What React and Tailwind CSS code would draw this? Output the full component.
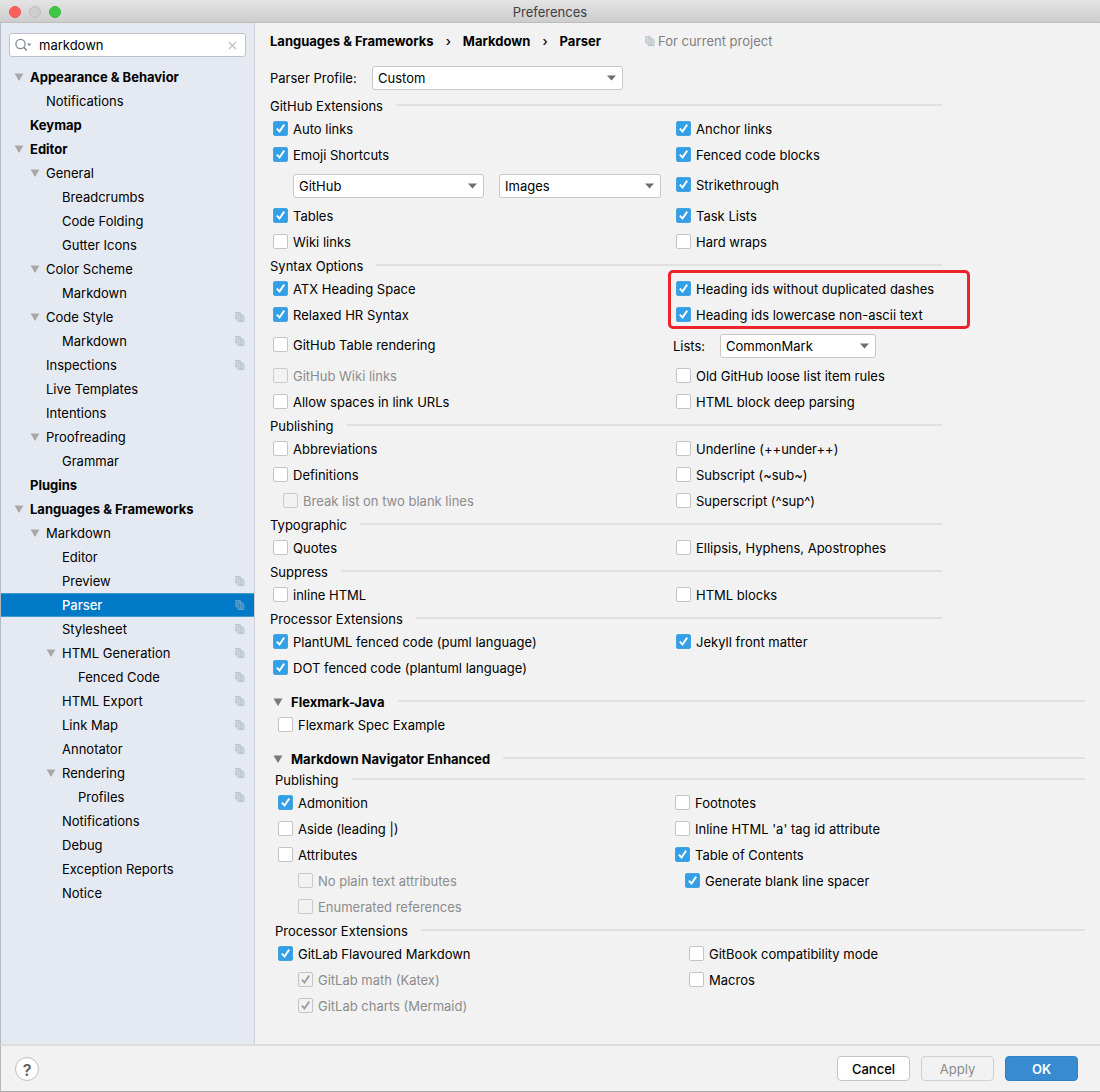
import React from "react";

const TREE = [
  { label: "Appearance & Behavior", depth: 0, open: true, bold: true },
  { label: "Notifications", depth: 1 },
  { label: "Keymap", depth: 0, bold: true },
  { label: "Editor", depth: 0, open: true, bold: true },
  { label: "General", depth: 1, open: true },
  { label: "Breadcrumbs", depth: 2 },
  { label: "Code Folding", depth: 2 },
  { label: "Gutter Icons", depth: 2 },
  { label: "Color Scheme", depth: 1, open: true },
  { label: "Markdown", depth: 2 },
  { label: "Code Style", depth: 1, open: true, project: true },
  { label: "Markdown", depth: 2, project: true },
  { label: "Inspections", depth: 1, project: true },
  { label: "Live Templates", depth: 1 },
  { label: "Intentions", depth: 1 },
  { label: "Proofreading", depth: 1, open: true },
  { label: "Grammar", depth: 2 },
  { label: "Plugins", depth: 0, bold: true },
  { label: "Languages & Frameworks", depth: 0, open: true, bold: true },
  { label: "Markdown", depth: 1, open: true },
  { label: "Editor", depth: 2 },
  { label: "Preview", depth: 2, project: true },
  { label: "Parser", depth: 2, project: true, selected: true },
  { label: "Stylesheet", depth: 2, project: true },
  { label: "HTML Generation", depth: 2, open: true, project: true },
  { label: "Fenced Code", depth: 3, project: true },
  { label: "HTML Export", depth: 2, project: true },
  { label: "Link Map", depth: 2, project: true },
  { label: "Annotator", depth: 2, project: true },
  { label: "Rendering", depth: 2, open: true, project: true },
  { label: "Profiles", depth: 3, project: true },
  { label: "Notifications", depth: 2 },
  { label: "Debug", depth: 2 },
  { label: "Exception Reports", depth: 2 },
  { label: "Notice", depth: 2 },
];

const INDENT = ["pl-3", "pl-7", "pl-11", "pl-15"];

function ProjectIcon({ className = "" }) {
  return (
    <svg viewBox="0 0 10 10" className={`size-[10px] shrink-0 ${className}`} fill="none" stroke="currentColor" aria-hidden="true">
      <path d="M2.5 7H0.8V0.5H5.5V1.5" strokeWidth="0.9" />
      <path d="M1 1h4.5v1H2.5v5H1z" fill="currentColor" fillOpacity="0.5" stroke="none" />
      <path d="M3 2.5h4l2 1.8v5.2H3z" strokeWidth="0.9" fill="currentColor" fillOpacity="0.35" />
      <path d="M5.4 3v6M7 3v6" strokeWidth="0.8" />
    </svg>
  );
}

function Triangle({ className = "" }) {
  return (
    <svg viewBox="0 0 10 8" className={`h-2 w-[10px] shrink-0 ${className}`} fill="currentColor" aria-hidden="true">
      <path d="M0.5 0.5h9L5 8z" />
    </svg>
  );
}

function TreeRow({ item }) {
  return (
    <li>
      <button
        type="button"
        aria-current={item.selected ? "page" : undefined}
        className={`flex h-6 w-full items-center gap-[5px] pr-[9px] text-left ${INDENT[item.depth]} ${
          item.selected ? "border-y border-[#3d9ad3] bg-[#0079c6] text-white" : ""
        } ${item.bold ? "font-bold" : item.selected ? "font-medium" : ""}`}
      >
        <span className="flex w-3 shrink-0 justify-center">
          {item.open && <Triangle className="text-[#a9a9a9]" />}
        </span>
        <span className="grow truncate">{item.label}</span>
        {item.project && <ProjectIcon className={item.selected ? "text-[#6aa5cc]" : "text-[#b3bfc6]"} />}
      </button>
    </li>
  );
}

function Check({ label, on = false, disabled = false, className = "" }) {
  return (
    <label className={`flex h-[26px] items-center gap-[5px] pb-[1px] pl-[3px] ${disabled ? "text-[#8c8c8c]" : ""} ${className}`}>
      <span className="grid size-[15px] shrink-0 place-items-center">
        <input
          type="checkbox"
          defaultChecked={on}
          disabled={disabled}
          className="peer col-start-1 row-start-1 size-[15px] appearance-none rounded-[2px] border border-[#c4c4c4] bg-white checked:border-[#45a3e2] checked:bg-[#339fe6] disabled:border-[#cacaca] disabled:bg-[#f2f2f2]"
        />
        <svg
          viewBox="0 0 15 15"
          className="pointer-events-none col-start-1 row-start-1 hidden size-[15px] text-white peer-checked:block peer-disabled:text-[#a0a0a0]"
          fill="none"
          stroke="currentColor"
          strokeWidth="1.9"
          aria-hidden="true"
        >
          <path d="M3.8 7.6l2.7 2.9L11.2 3.6" />
        </svg>
      </span>
      <span className="pt-[1px] whitespace-nowrap">{label}</span>
    </label>
  );
}

function Combo({ label, value, options, className = "" }) {
  return (
    <span className={`grid h-6 items-center ${className}`}>
      <select
        aria-label={label}
        defaultValue={value}
        className="col-start-1 row-start-1 h-6 w-full appearance-none rounded-[3px] border border-[#c8c8c8] bg-white pr-6 pl-[5px]"
      >
        {options.map((o) => (
          <option key={o}>{o}</option>
        ))}
      </select>
      <svg
        viewBox="0 0 9 6"
        className="pointer-events-none col-start-1 row-start-1 mr-[7px] h-[6px] w-[9px] justify-self-end text-[#6e6e6e]"
        fill="currentColor"
        aria-hidden="true"
      >
        <path d="M0 0.5h9L4.5 5.5z" />
      </svg>
    </span>
  );
}

function Section({ title }) {
  return (
    <div className="flex h-[21px] items-center gap-[13px]">
      <h3 className="whitespace-nowrap">{title}</h3>
      <span className="mb-[2px] h-[2px] grow bg-[#e0e0e0]" />
    </div>
  );
}

function Fold({ title, className = "" }) {
  return (
    <button type="button" aria-expanded="true" className={`flex h-5 w-full items-center gap-2 pl-[3px] ${className}`}>
      <Triangle className="text-[#7a7a7a]" />
      <span className="pr-[5px] font-bold whitespace-nowrap">{title}</span>
      <span className="mb-[2px] h-[2px] grow bg-[#e0e0e0]" />
    </button>
  );
}

function Columns({ children }) {
  return <div className="grid grid-cols-[403px_1fr]">{children}</div>;
}

function Sidebar() {
  return (
    <aside className="w-[255px] shrink-0 border-r border-l border-r-[#d0d2d6] border-l-[#b5b8bd] bg-[#e5eaf2] pt-[10px]">
      <label className="mx-2 mb-2 flex h-6 items-center rounded-[3px] border border-[#bfc3c8] bg-white pr-2 pl-[5px]">
        <svg viewBox="0 0 18 14" className="h-[14px] w-[18px] shrink-0 text-[#7f8b91]" fill="none" stroke="currentColor" strokeWidth="1.3" aria-hidden="true">
          <circle cx="5.5" cy="6" r="4.6" />
          <path d="M8.8 9.3l3 3.2" strokeWidth="1.5" />
          <path d="M12 5.5h4.4L14.2 8.2z" fill="currentColor" stroke="none" />
        </svg>
        <input aria-label="Search" defaultValue="markdown" className="ml-[6px] w-0 grow bg-transparent outline-none" />
        <button type="button" aria-label="Clear search">
          <svg viewBox="0 0 9 9" className="size-[9px] text-[#b9bec2]" fill="none" stroke="currentColor" strokeWidth="1.2" aria-hidden="true">
            <path d="M1 1l7 7M8 1l-7 7" />
          </svg>
        </button>
      </label>
      <ul>
        {TREE.map((item, i) => (
          <TreeRow key={i} item={item} />
        ))}
      </ul>
    </aside>
  );
}

function Settings() {
  return (
    <main className="min-w-0 grow pt-[6px] pr-[15px] pl-[15px]">
      <div className="flex h-6 items-center whitespace-nowrap">
        <nav aria-label="Breadcrumb" className="flex gap-3 font-bold">
          <span>Languages &amp; Frameworks</span>
          <span className="font-medium">›</span>
          <span>Markdown</span>
          <span className="font-medium">›</span>
          <span>Parser</span>
        </nav>
        <ProjectIcon className="mr-[3px] ml-11 text-[#b3bfc6]" />
        <span className="text-[#808080]">For current project</span>
      </div>

      <div className="mt-[13px] mb-[5px] flex items-center">
        <span className="w-[102px]">Parser Profile:</span>
        <Combo label="Parser Profile" value="Custom" options={["Custom", "GitHub", "GitLab"]} className="w-[251px]" />
      </div>

      <div className="max-w-[672px]">
        <Section title="GitHub Extensions" />
        <Columns>
          <div>
            <Check label="Auto links" on />
            <Check label="Emoji Shortcuts" on />
            <div className="flex h-[35px] items-center gap-[15px] pl-[23px]">
              <Combo label="Emoji shortcut type" value="GitHub" options={["GitHub", "Emoji Cheat Sheet"]} className="w-[191px]" />
              <Combo label="Emoji image type" value="Images" options={["Images", "Unicode"]} className="w-[162px]" />
            </div>
            <Check label="Tables" on />
            <Check label="Wiki links" />
          </div>
          <div>
            <Check label="Anchor links" on />
            <Check label="Fenced code blocks" on />
            <div className="flex h-[35px] items-start pt-1">
              <Check label="Strikethrough" on />
            </div>
            <Check label="Task Lists" on />
            <Check label="Hard wraps" />
          </div>
        </Columns>

        <Section title="Syntax Options" />
        <Columns>
          <div>
            <Check label="ATX Heading Space" on />
            <Check label="Relaxed HR Syntax" on />
            <div className="flex h-[35px] items-start pt-1">
              <Check label="GitHub Table rendering" />
            </div>
            <Check label="GitHub Wiki links" disabled />
            <Check label="Allow spaces in link URLs" />
          </div>
          <div>
            <div className="relative">
              <Check label="Heading ids without duplicated dashes" on />
              <Check label="Heading ids lowercase non-ascii text" on />
              <span className="pointer-events-none absolute -top-[6px] -bottom-[1px] -left-[5px] w-[302px] rounded-[5px] border-3 border-[#ee2229]" />
            </div>
            <div className="flex h-[35px] items-center">
              <span className="w-[47px]">Lists:</span>
              <Combo label="Lists" value="CommonMark" options={["CommonMark", "Fixed", "GitHub"]} className="w-[156px]" />
            </div>
            <Check label="Old GitHub loose list item rules" />
            <Check label="HTML block deep parsing" />
          </div>
        </Columns>

        <Section title="Publishing" />
        <Columns>
          <div>
            <Check label="Abbreviations" />
            <Check label="Definitions" />
            <Check label="Break list on two blank lines" disabled className="ml-[10px]" />
          </div>
          <div>
            <Check label="Underline (++under++)" />
            <Check label="Subscript (~sub~)" />
            <Check label="Superscript (^sup^)" />
          </div>
        </Columns>

        <Section title="Typographic" />
        <Columns>
          <Check label="Quotes" />
          <Check label="Ellipsis, Hyphens, Apostrophes" />
        </Columns>

        <Section title="Suppress" />
        <Columns>
          <Check label="inline HTML" />
          <Check label="HTML blocks" />
        </Columns>

        <Section title="Processor Extensions" />
        <Columns>
          <div>
            <Check label="PlantUML fenced code (puml language)" on />
            <Check label="DOT fenced code (plantuml language)" on />
          </div>
          <Check label="Jekyll front matter" on />
        </Columns>
      </div>

      <Fold title="Flexmark-Java" className="mt-[11px]" />
      <div className="pl-[5px]">
        <Check label="Flexmark Spec Example" />
      </div>

      <Fold title="Markdown Navigator Enhanced" className="mt-[11px]" />
      <div className="pb-6 pl-[5px]">
        <Section title="Publishing" />
        <div className="grid grid-cols-[397px_1fr]">
          <div>
            <Check label="Admonition" on />
            <Check label="Aside (leading |)" />
            <Check label="Attributes" />
            <Check label="No plain text attributes" disabled className="ml-5" />
            <Check label="Enumerated references" disabled className="ml-5" />
          </div>
          <div>
            <Check label="Footnotes" />
            <Check label="Inline HTML 'a' tag id attribute" />
            <Check label="Table of Contents" on />
            <Check label="Generate blank line spacer" on className="ml-[10px]" />
          </div>
        </div>
        <Section title="Processor Extensions" />
        <div className="grid grid-cols-[411px_1fr]">
          <div>
            <Check label="GitLab Flavoured Markdown" on />
            <Check label="GitLab math (Katex)" on disabled className="ml-5 [&_input]:checked:border-[#c4c4c4] [&_input]:checked:bg-[#f2f2f2]" />
            <Check label="GitLab charts (Mermaid)" on disabled className="ml-5 [&_input]:checked:border-[#c4c4c4] [&_input]:checked:bg-[#f2f2f2]" />
          </div>
          <div>
            <Check label="GitBook compatibility mode" />
            <Check label="Macros" />
          </div>
        </div>
      </div>
    </main>
  );
}

export default function App() {
  return (
    <div className="flex min-h-screen flex-col border-b border-[#a8a8a8] bg-[#f2f2f2] font-['Inter',sans-serif] text-[13px] leading-4 text-black">
      <header className="grid h-[23px] shrink-0 grid-cols-[1fr_auto_1fr] items-center border-b border-[#bdbdbd] bg-linear-to-b from-[#e4e4e4] to-[#cdcdcd] pt-[1px]">
        <div className="flex gap-2 pl-[9px]">
          <button type="button" aria-label="Close" className="size-3 rounded-full border border-[#ec5a54] bg-[#fc605c]" />
          <button type="button" aria-label="Minimize" className="size-3 rounded-full border border-[#bcbcbc] bg-[#cfcfcf]" />
          <button type="button" aria-label="Zoom" className="size-3 rounded-full border border-[#3ab83f] bg-[#3ec944]" />
        </div>
        <h1 className="text-[#404040]">Preferences</h1>
      </header>
      <div className="flex grow">
        <Sidebar />
        <Settings />
      </div>
      <footer className="flex h-[47px] shrink-0 items-center gap-[11px] border-t-2 border-l border-t-[#dcdcdc] border-l-[#b5b8bd] pr-[22px] pl-[14px]">
        <button type="button" aria-label="Help" className="mr-auto size-6 rounded-full border border-[#bdbdbd] bg-white text-base font-semibold text-[#606060]">
          ?
        </button>
        <button type="button" className="h-[25px] w-[73px] rounded-[4px] border border-[#c4c4c4] bg-white font-medium">Cancel</button>
        <button type="button" disabled className="h-[25px] w-[73px] rounded-[4px] border border-[#cfcfcf] text-[#8c8c8c]">Apply</button>
        <button type="button" className="h-[25px] w-[73px] rounded-[4px] border border-[#3182c4] bg-[#388bd0] font-semibold text-white">OK</button>
      </footer>
    </div>
  );
}
